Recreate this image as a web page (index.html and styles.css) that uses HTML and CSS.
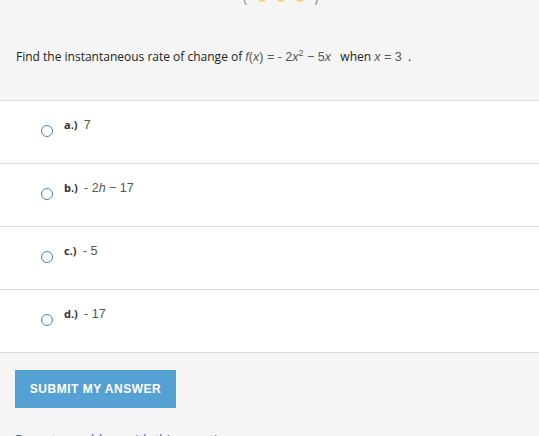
FILE: index.html
```html
<!DOCTYPE html>
<html>
<head>
<meta charset="utf-8">
<link rel="stylesheet" href="styles.css">
</head>
<body>
<div class="progress">
  <span class="paren">(</span>
  <span class="dot"></span><span class="dot"></span><span class="dot"></span>
  <span class="paren">)</span>
</div>
<div class="question">
  Find the instantaneous rate of change of <span class="math"><i>f</i>(<i>x</i>) = - 2<i>x</i><sup>2</sup> &minus; 5<i>x</i></span>&nbsp;&nbsp; when <span class="math"><i>x</i> = 3</span>&nbsp; .
</div>
<div class="answers">
  <div class="row"><span class="radio"></span><span class="label"><b>a.)</b>&nbsp; <span class="math">7</span></span></div>
  <div class="row"><span class="radio"></span><span class="label"><b>b.)</b>&nbsp; <span class="math">- 2<i>h</i> &minus; 17</span></span></div>
  <div class="row"><span class="radio"></span><span class="label"><b>c.)</b>&nbsp; <span class="math">- 5</span></span></div>
  <div class="row"><span class="radio"></span><span class="label"><b>d.)</b>&nbsp; <span class="math">- 17</span></span></div>
</div>
<div class="footer">
  <button class="submit">SUBMIT MY ANSWER</button>
  <div class="report">Report a problem with this question</div>
</div>
</body>
</html>
```
FILE: styles.css
```css
html, body {
  margin: 0;
  padding: 0;
  background: #f5f5f5;
  font-family: "Open Sans", "Liberation Sans", Arial, sans-serif;
  color: #222;
  overflow: hidden;
}
.progress {
  display: flex;
  justify-content: flex-start;
  align-items: center;
  gap: 9px;
  height: 5px;
  overflow: hidden;
  padding-left: 243px;
}
.progress .paren {
  color: #999;
  font-size: 16px;
  line-height: 16px;
  margin-top: -12px;
}
.progress .dot {
  width: 10px;
  height: 10px;
  border-radius: 50%;
  background: #f5d76e;
  margin-top: -11px;
}
.question {
  height: 96px;
  box-sizing: border-box;
  padding: 44px 0 0 16px;
  font-size: 12px;
  line-height: 16px;
  border-bottom: 1px solid #dddddd;
}
.math {
  color: #555;
  font-family: "Liberation Sans", Arial, sans-serif;
  font-size: 12.5px;
}
.math sup {
  font-size: 9px;
  line-height: 0;
}
.answers {
  background: #fff;
}
.row {
  height: 63px;
  box-sizing: border-box;
  border-bottom: 1px solid #dddddd;
  display: flex;
  align-items: flex-start;
  padding: 16px 0 0 41px;
  font-size: 12px;
  line-height: 16px;
}
.radio {
  width: 10px;
  height: 10px;
  border: 1.6px solid #4a7fb5;
  border-radius: 50%;
  margin-top: 8px;
  margin-right: 11px;
  flex: none;
}
.label b {
  color: #333;
  font-size: 11px;
}
.footer {
  padding: 17px 0 0 15px;
}
.submit {
  width: 161px;
  height: 38px;
  border: none;
  background: #55a1d3;
  color: #fff;
  font-family: "Liberation Sans", Arial, sans-serif;
  font-weight: bold;
  font-size: 12px;
  letter-spacing: 0.5px;
  padding: 0;
}
.report {
  margin-top: 22px;
  color: #2a6fa8;
  font-size: 13px;
}
```
